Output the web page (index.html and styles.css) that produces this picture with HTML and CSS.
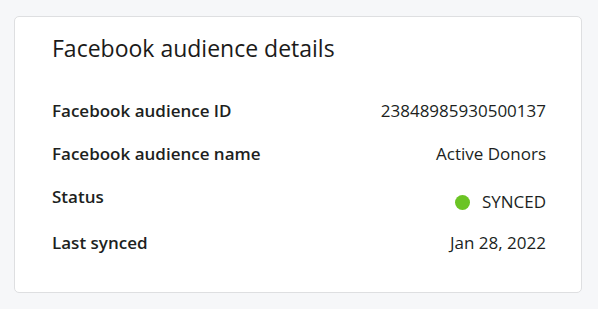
FILE: index.html
```html
<!DOCTYPE html>
<html lang="en">
<head>
    <meta charset="UTF-8">
    <meta name="viewport" content="width=device-width, initial-scale=1.0">
    <title>Facebook audience details</title>
    <link rel="stylesheet" href="styles.css">
</head>
<body>
    <div class="card">
        <h2 class="card-title">Facebook audience details</h2>
        <dl class="details">
            <div class="row">
                <dt>Facebook audience ID</dt>
                <dd>23848985930500137</dd>
            </div>
            <div class="row">
                <dt>Facebook audience name</dt>
                <dd>Active Donors</dd>
            </div>
            <div class="row row-status">
                <dt>Status</dt>
                <dd class="status"><span class="dot"></span>SYNCED</dd>
            </div>
            <div class="row">
                <dt>Last synced</dt>
                <dd>Jan 28, 2022</dd>
            </div>
        </dl>
    </div>
</body>
</html>
```
FILE: styles.css
```css
body {
    font-family: "Open Sans", "Noto Sans", Arial, sans-serif;
    margin: 0;
    padding: 16px 16px 16px 14px;
    background-color: #f6f7f9;
    color: #201f1e;
}

.card {
    background-color: #ffffff;
    border: 1px solid #dedfe1;
    border-radius: 5px;
    padding: 15px 35px 37px 37px;
}

.card-title {
    margin: 0 0 35px 0;
    font-size: 23px;
    font-weight: 400;
    line-height: 32px;
    color: #1b1a19;
}

.details {
    margin: 0;
}

.row {
    display: flex;
    justify-content: space-between;
    align-items: flex-start;
    margin-bottom: 19px;
}

.row:last-child {
    margin-bottom: 0;
}

.row-status {
    margin-bottom: 17px;
}

dt {
    font-size: 17px;
    font-weight: 600;
    line-height: 24px;
}

dd {
    margin: 0;
    font-size: 17px;
    line-height: 24px;
}

.row-status dd {
    margin-top: 5px;
}

.status {
    display: flex;
    align-items: center;
}

.dot {
    width: 15px;
    height: 15px;
    border-radius: 50%;
    background-color: #6bc424;
    margin-right: 12px;
}
```
